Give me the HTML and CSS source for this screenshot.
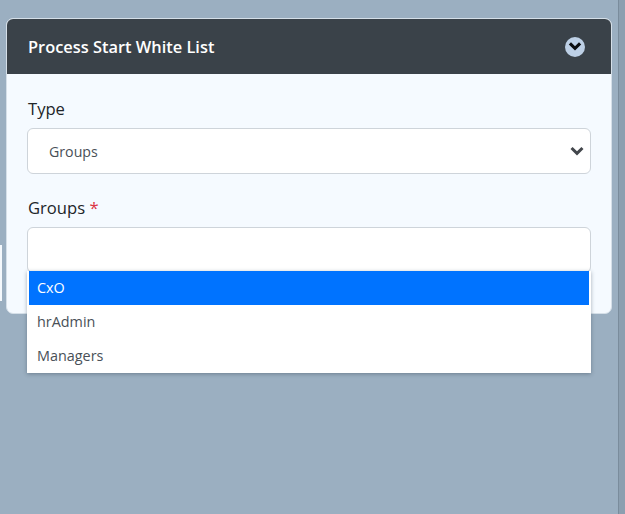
FILE: index.html
```html
<!DOCTYPE html>
<html lang="en">
<head>
  <meta charset="UTF-8" />
  <meta name="viewport" content="width=device-width, initial-scale=1" />
  <title>Process Start White List</title>
  <link rel="stylesheet" href="styles.css">
</head>
<body>
  <div class="edge-tab"></div>

  <main class="content">
    <section class="card">
      <header class="card-header">
        <h2>Process Start White List</h2>
        <svg class="toggle" width="20" height="20" viewBox="0 0 20 20" aria-hidden="true">
          <circle cx="10" cy="10" r="10" fill="#bdd0e6" />
          <path d="M3.8 7.4 L6 5.2 L10 9.2 L14 5.2 L16.2 7.4 L10 13.4 Z" fill="#0b0d10" />
        </svg>
      </header>

      <div class="card-body">
        <div class="field">
          <label>Type</label>
          <div class="select">
            <span>Groups</span>
            <svg width="14" height="10" viewBox="0 0 14 10" aria-hidden="true">
              <path d="M0.5 3 L2.6 0.9 L7 5.2 L11.4 0.9 L13.5 3 L7 9.4 Z" fill="#43474c" />
            </svg>
          </div>
        </div>

        <div class="field">
          <label>Groups <span class="required">*</span></label>
          <div class="multi">
            <input type="text" />
            <ul class="options">
              <li class="active">CxO</li>
              <li>hrAdmin</li>
              <li>Managers</li>
            </ul>
          </div>
        </div>
      </div>
    </section>
  </main>

  <div class="scroll-edge"></div>
</body>
</html>
```
FILE: styles.css
```css
html, body {
  height: 100%;
}
body {
  margin: 0;
  display: flex;
  overflow: hidden;
  background: #9bafc1;
  font-family: "Open Sans", "Noto Sans", sans-serif;
  color: #212529;
}
.content {
  flex: 1;
  padding: 18px 6px 0 6px;
}
.scroll-edge {
  width: 7px;
  background: #8c9fb0;
  border-left: 1px solid #7a8c9c;
  box-sizing: border-box;
}
.edge-tab {
  position: absolute;
  left: 0;
  top: 245px;
  width: 2px;
  height: 56px;
  background: #f4f8fc;
}
.card {
  height: 296px;
  box-sizing: border-box;
  background: #f5faff;
  border: 1px solid #d5dfe8;
  border-radius: 7px;
}
.card-header {
  height: 55px;
  box-sizing: border-box;
  padding: 0 26px 0 21px;
  display: flex;
  align-items: center;
  justify-content: space-between;
  background: #3a4249;
  border-radius: 6px 6px 0 0;
}
.card-header h2 {
  margin: 0;
  font-size: 16.4px;
  font-weight: 600;
  color: #fff;
}
.card-body {
  padding: 23px 20px 0 20px;
}
.field {
  margin-bottom: 22px;
}
.field label {
  display: block;
  height: 24px;
  margin-bottom: 7px;
  padding-left: 1px;
  font-size: 16.6px;
  line-height: 24px;
}
.required {
  color: #dc3545;
}
.select {
  height: 46px;
  box-sizing: border-box;
  padding: 0 6px 0 21px;
  display: flex;
  align-items: center;
  justify-content: space-between;
  background: #fff;
  border: 1px solid #ced4da;
  border-radius: 6px;
  font-size: 14.2px;
  color: #495057;
}
.multi {
  position: relative;
}
.multi input {
  display: block;
  width: 100%;
  height: 46px;
  box-sizing: border-box;
  background: #fff;
  border: 1px solid #ced4da;
  border-radius: 6px;
}
.options {
  position: absolute;
  z-index: 2;
  top: 44px;
  left: 0;
  right: 0;
  margin: 0;
  padding: 0 2px 0 2px;
  list-style: none;
  background: #fff;
  box-shadow: 0 1px 4px rgba(40, 55, 70, 0.4);
  font-size: 14.4px;
  color: #495057;
}
.options li {
  height: 34px;
  padding-left: 8px;
  line-height: 34px;
}
.options li.active {
  background: #0073ff;
  color: #fff;
}
```
